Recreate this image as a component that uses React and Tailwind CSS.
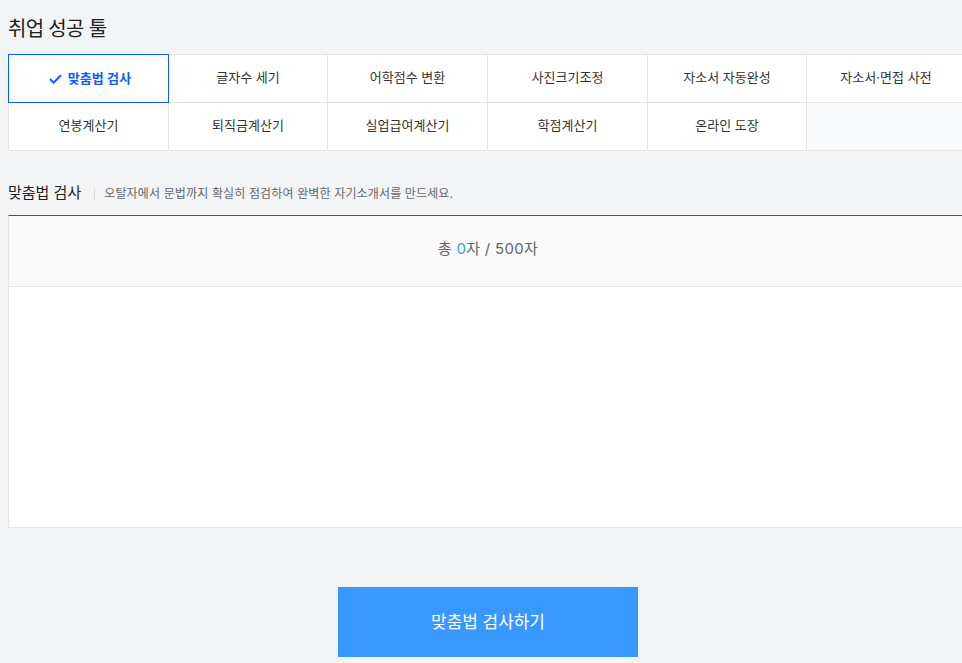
import React from "react";

const row1 = ["글자수 세기", "어학점수 변환", "사진크기조정", "자소서 자동완성", "자소서·면접 사전"];
const row2 = ["연봉계산기", "퇴직금계산기", "실업급여계산기", "학점계산기", "온라인 도장"];

function Cell({ children }) {
  return (
    <div className="flex h-12 items-center justify-center border-r border-b border-[#e5e5e5] bg-white pb-px text-[13px] tracking-[0.03px] text-[#333]">
      {children}
    </div>
  );
}

export default function App() {
  return (
    <div className="h-[663px] w-[962px] overflow-hidden bg-[#f3f4f6] font-['Inter','Noto_Sans_CJK_KR',sans-serif]">
      <div className="w-[958px] pl-2">
        <h1 className="pt-[15px] text-[20px] leading-[28px] font-normal tracking-[-0.7px] text-[#222]">취업 성공 툴</h1>
        <div className="mt-[11px] grid w-[958px] grid-cols-[160px_159px_160px_160px_159px_1fr] border-t border-l border-[#e5e5e5]">
          <div className="-mt-px -ml-px flex h-[49px] w-[161px] items-center justify-center gap-[6px] border border-[#0b5cff] bg-white pl-[3px] text-[13px] font-bold tracking-[0.1px] text-[#0b5cff]">
            <svg width="13" height="10" viewBox="0 0 13 10" fill="none" stroke="#0b5cff" strokeWidth="2"><path d="M1 5l3.6 3.6L12 1.2" /></svg>
            <span>맞춤법 검사</span>
          </div>
          {row1.map((t) => <Cell key={t}>{t}</Cell>)}
          {row2.map((t) => <Cell key={t}>{t}</Cell>)}
          <div className="h-12 border-b border-[#e5e5e5] bg-[#f8f9fb]" />
        </div>
        <div className="mt-[33px] flex items-start">
          <h2 className="text-[15px] leading-[18px] font-normal text-[#222]">맞춤법 검사</h2>
          <span className="mt-[4px] ml-[13px] h-[13px] w-px bg-[#d9d9d9]" />
          <p className="mt-px ml-[9px] text-[12px] leading-[18px] tracking-[0.14px] text-[#666]">오탈자에서 문법까지 확실히 점검하여 완벽한 자기소개서를 만드세요.</p>
        </div>
        <div className="mt-[12px] w-[958px] border-x border-b border-t border-b-[#e5e5e5] border-x-[#e5e5e5] border-t-[#4a4f63] bg-white">
          <div className="flex h-[71px] items-center justify-center border-b border-[#e5e5e5] bg-[#fafafa] pb-1 pl-0.5 text-[15px] tracking-[0.3px] text-[#666]">
            총&nbsp;<span className="text-[#3898ff]">0</span>자 / 500자
          </div>
          <div className="h-[240px]" />
        </div>
        <div className="mt-[59px] flex w-[960px] justify-center">
          <button className="h-[70px] w-[300px] bg-[#3898ff] pt-0.5 text-[17px] tracking-[-0.05px] text-white">맞춤법 검사하기</button>
        </div>
      </div>
    </div>
  );
}
